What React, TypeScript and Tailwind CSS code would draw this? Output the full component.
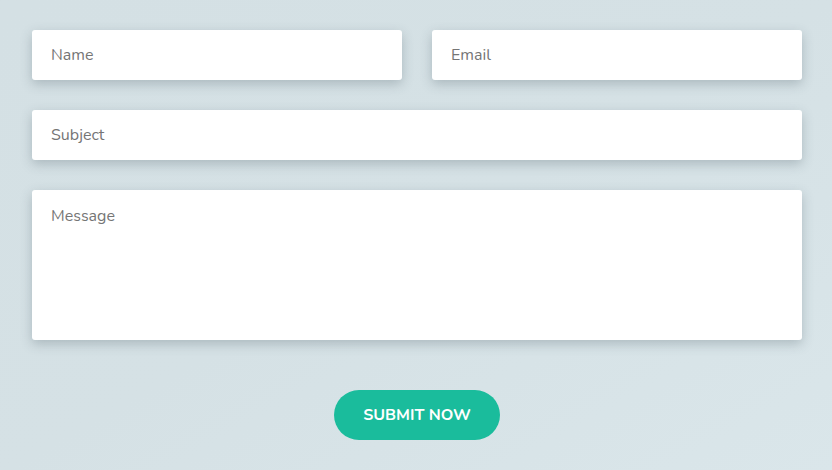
export default function App() {
  const field =
    "h-[50px] w-full rounded-[3px] bg-white px-[19px] text-[16px] text-[#555] placeholder:text-[#757575] shadow-[0_4px_12px_rgba(60,80,90,0.28)] outline-none";

  return (
    <div
      className="min-h-[470px] w-full bg-gradient-to-br from-[#d4e0e4] via-[#d5e1e5] to-[#dae6ea] pl-[32px] pr-[30px] pt-[30px]"
      style={{ fontFamily: '"Nunito", "Lato", "Noto Sans", sans-serif' }}
    >
      <form className="flex flex-col gap-[30px]" onSubmit={(e) => e.preventDefault()}>
        <div className="grid grid-cols-2 gap-[30px]">
          <input className={field} placeholder="Name" />
          <input className={field} placeholder="Email" />
        </div>
        <input className={field} placeholder="Subject" />
        <textarea
          className="h-[150px] w-full resize-none rounded-[3px] bg-white px-[19px] pt-[14px] text-[16px] text-[#555] placeholder:text-[#757575] shadow-[0_4px_12px_rgba(60,80,90,0.28)] outline-none"
          placeholder="Message"
        />
        <div className="flex justify-center pt-[20px]">
          <button
            type="submit"
            className="h-[50px] w-[166px] rounded-full bg-[#1abc9c] text-[16px] font-bold uppercase text-white"
          >
            Submit Now
          </button>
        </div>
      </form>
    </div>
  );
}
